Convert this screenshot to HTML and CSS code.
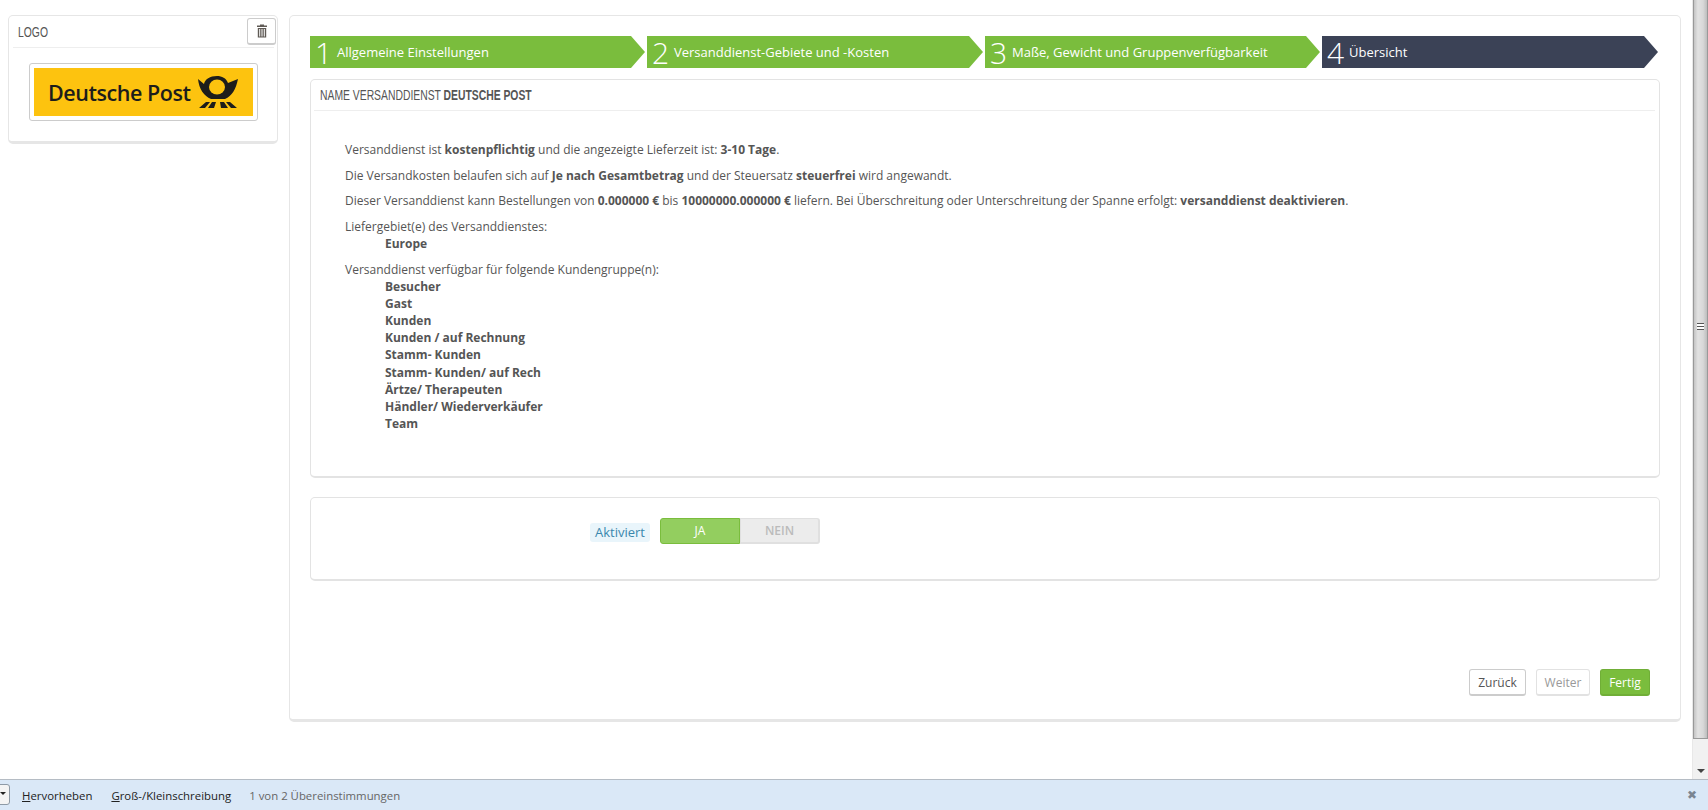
FILE: index.html
```html
<!DOCTYPE html>
<html lang="de">
<head>
<meta charset="utf-8">
<title>Versanddienst</title>
<link rel="stylesheet" href="styles.css">
</head>
<body>
<div class="page">
  <div class="content">
    <aside class="logo-panel">
      <div class="logo-head">
        <span class="logo-title cond">LOGO</span>
        <button class="trash-btn" aria-label="Löschen">
          <svg width="12" height="14" viewBox="0 0 12 14"><path d="M4 1.500V.5h4v1h3V3H1V1.500zM1.800 4h8.400v9.500H1.800zM3.200 5v7.500h1V5zm2.300 0v7.500h1V5zm2.300 0v7.500h1V5z" fill="#5f5a55" fill-rule="evenodd"/></svg>
        </button>
      </div>
      <div class="logo-frame">
        <div class="logo-img">
          <span class="logo-text">Deutsche Post</span>
          <svg class="horn" width="40" height="32" viewBox="0 0 40 32">
            <path d="M0 3 C1 13 6 20 13 23 L27 23 C34 20 38 13 40 3 L30 7 C28 2 24 0 19 0 C12 0 7 3 6 8 Z" fill="#1d1d1b"/>
            <ellipse cx="19" cy="11" rx="8" ry="7.500" fill="#fdc30f"/>
            <path d="M1 32 L8 26 H12 L7 32 Z M10 32 L14 26 H18 L16 32 Z M23 32 L22 26 H26 L30 32 Z M33 32 L28 26 H32 L39 32 Z" fill="#1d1d1b"/>
          </svg>
        </div>
      </div>
    </aside>
    <main class="main-panel">
      <nav class="steps">
        <div class="step step-a"><span class="num">1</span><span class="label">Allgemeine Einstellungen</span></div>
        <div class="step step-b"><span class="num">2</span><span class="label">Versanddienst-Gebiete und -Kosten</span></div>
        <div class="step step-a"><span class="num">3</span><span class="label">Maße, Gewicht und Gruppenverfügbarkeit</span></div>
        <div class="step step-b current"><span class="num">4</span><span class="label">Übersicht</span></div>
      </nav>
      <section class="card summary">
        <h3 class="card-title"><span class="cond">NAME VERSANDDIENST <b>DEUTSCHE POST</b></span></h3>
        <div class="summary-body">
          <p>Versanddienst ist <b>kostenpflichtig</b> und die angezeigte Lieferzeit ist: <b>3-10 Tage</b>.</p>
          <p>Die Versandkosten belaufen sich auf <b>Je nach Gesamtbetrag</b> und der Steuersatz <b>steuerfrei</b> wird angewandt.</p>
          <p>Dieser Versanddienst kann Bestellungen von <b>0.000000 €</b> bis <b>10000000.000000 €</b> liefern. Bei Überschreitung oder Unterschreitung der Spanne erfolgt: <b>versanddienst deaktivieren</b>.</p>
          <p>Liefergebiet(e) des Versanddienstes:</p>
          <ul class="names"><li>Europe</li></ul>
          <p>Versanddienst verfügbar für folgende Kundengruppe(n):</p>
          <ul class="names">
            <li>Besucher</li><li>Gast</li><li>Kunden</li><li>Kunden / auf Rechnung</li><li>Stamm- Kunden</li><li>Stamm- Kunden/ auf Rech</li><li>Ärtze/ Therapeuten</li><li>Händler/ Wiederverkäufer</li><li>Team</li>
          </ul>
        </div>
      </section>
      <section class="card toggle-card">
        <span class="hint">Aktiviert</span>
        <div class="switch"><span class="sw-on">JA</span><span class="sw-off">NEIN</span></div>
      </section>
      <div class="actions">
        <button class="btn btn-back">Zurück</button>
        <button class="btn btn-next disabled">Weiter</button>
        <button class="btn btn-done primary">Fertig</button>
      </div>
    </main>
  </div>
  <div class="scrollbar">
    <div class="sb-thumb"><span class="grip"></span></div>
    <div class="sb-arrow"></div>
  </div>
</div>
<footer class="findbar">
  <span class="find-box"><span class="find-caret"></span></span>
  <span class="find-opt"><u>H</u>ervorheben</span>
  <span class="find-opt"><u>G</u>roß-/Kleinschreibung</span>
  <span class="find-status">1 von 2 Übereinstimmungen</span>
  <span class="find-close">✖</span>
</footer>
</body>
</html>
```
FILE: styles.css
```css
* { box-sizing: border-box; }
html, body { margin: 0; height: 100%; overflow: hidden; }
body {
  width: 1708px; height: 810px; background: #fff; color: #555;
  font-family: "Open Sans", "Noto Sans", sans-serif; font-size: 12px;
  display: flex; flex-direction: column;
}
.page { flex: 1; display: flex; min-height: 0; }
.content { flex: 1; display: flex; align-items: flex-start; gap: 11px; padding: 15px 11px 0 8px; }
.cond {
  display: inline-block; transform: scaleX(.74); transform-origin: left center; white-space: nowrap;
  font-family: "Liberation Sans", sans-serif; font-size: 14px; color: #555;
}

.logo-panel {
  width: 270px; height: 129px; flex: none; padding: 0 3px 0 4px;
  border: 1px solid #e6e6e6; border-bottom-width: 3px; border-radius: 5px;
}
.logo-head { display: flex; align-items: flex-start; justify-content: space-between; height: 32px; border-bottom: 1px solid #eee; padding: 2px 0 0 5px; }
.logo-title { margin-top: 6px; }
.trash-btn {
  width: 29px; height: 27px; margin-right: -2px; padding: 0; display: flex; align-items: center; justify-content: center;
  background: #fff; border: 1px solid #ccc; border-bottom-width: 2px; border-radius: 3px;
}
.logo-frame { margin: 15px 0 0 16px; width: 229px; height: 58px; padding: 4px; border: 1px solid #ccc; border-radius: 3px; }
.logo-img { height: 48px; background: #fdc30f; display: flex; align-items: center; padding-left: 14px; gap: 8px; }
.logo-text { font-weight: 600; font-size: 21.5px; letter-spacing: -.45px; color: #1d1d1b; width: 142px; white-space: nowrap; }
.horn { flex: none; }

.main-panel {
  width: 1392px; height: 707px; flex: none; padding: 20px 0 0 20px;
  border: 1px solid #e6e6e6; border-bottom-width: 3px; border-radius: 5px;
  display: flex; flex-direction: column;
}
.steps { display: flex; gap: 2px; height: 32px; }
.step {
  height: 32px; background: #7abd3d; color: #fff; display: flex; align-items: center; padding-left: 5px;
  clip-path: polygon(0 0, calc(100% - 14px) 0, 100% 50%, calc(100% - 14px) 100%, 0 100%);
}
.step-a { width: 335px; }
.step-b { width: 336px; }
.step.current { background: #3b4256; }
.num { width: 22px; font-size: 30px; font-weight: 300; line-height: 32px; padding-top: 2px; }
.label { font-size: 13px; }

.card { border: 1px solid #e3e3e3; border-bottom-width: 2px; border-radius: 5px; width: 1350px; }
.summary { height: 399px; margin-top: 11px; padding: 0 4px 0 3px; }
.card-title {
  margin: 0; height: 31px; line-height: 30px; padding-left: 6px; border-bottom: 1px solid #eee;
  font-size: 14px; font-weight: 400;
}
.summary-body { padding: 30px 0 0 31px; line-height: 17.14px; color: #555; }
.summary-body p { margin: 0 0 8.5px; }
.names { margin: -8.5px 0 8.5px; padding: 0 0 0 40px; list-style: none; font-weight: 700; }

.toggle-card { height: 84px; margin-top: 19px; display: flex; align-items: flex-start; padding: 20px 0 0 279px; gap: 10px; }
.hint { margin-top: 5px; width: 60px; text-align: center; height: 19px; line-height: 19px; font-size: 13px; background: #e9f5fb; color: #3a87ad; border-radius: 3px; }
.switch { width: 160px; height: 26px; display: flex; font-size: 12px; line-height: 24px; text-align: center; }
.sw-on { width: 80px; background: #93ce5f; border: 1px solid #7abd3d; border-radius: 3px 0 0 3px; color: #fff; }
.sw-off { width: 80px; background: #ececec; border: 1px solid #e0e0e0; border-width: 1px 2px 2px 1px; border-radius: 0 3px 3px 0; color: #bbb; font-weight: 600; }

.actions { display: flex; justify-content: flex-end; gap: 10px; margin-top: 88px; width: 1340px; }
.btn {
  height: 27px; padding: 0; background: #fff; color: #555; font: 12px "Open Sans", sans-serif;
  border: 1px solid #ccc; border-bottom-width: 2px; border-radius: 3px;
}
.btn-back { width: 57px; }
.btn-next { width: 54px; }
.btn-done { width: 50px; }
.btn.disabled { color: #999; border-color: #e2e2e2; }
.btn.primary { background: #7abd3d; border-color: #70ae37; color: #fff; }

.scrollbar { width: 16px; flex: none; background: #f1f1f1; border-left: 1px solid #e8e8e8; position: relative; }
.sb-thumb {
  position: absolute; left: 0; right: 0; top: 0; height: 739px;
  background: linear-gradient(90deg, #c4c4c4, #e2e2e2 30%, #d8d8d8 70%, #bdbdbd);
  border: 1px solid #999; display: flex; align-items: center; justify-content: center; border-top: 0;
}
.grip { width: 7px; height: 7px; margin-top: -85px; border-top: 1px solid #555; border-bottom: 1px solid #555; background: linear-gradient(#fff 0 2px, #555 2px 3px, #fff 3px); }
.sb-arrow { position: absolute; left: 4px; bottom: 6px; width: 0; height: 0; border: 4px solid transparent; border-top: 4px solid #444; border-bottom: 0; }

.findbar {
  height: 31px; flex: none; background: #dae8f7; border-top: 1px solid #b5bcc4;
  display: flex; align-items: center; font: 11.4px "Open Sans", sans-serif; color: #222; position: relative;
}
.find-box { position: absolute; left: -8px; top: 4px; width: 18px; height: 21px; background: #f4f4f4; border: 1px solid #8e9aa6; border-radius: 3px; }
.find-caret { position: absolute; right: 3px; top: 7px; border: 3px solid transparent; border-top-color: #222; border-bottom: 0; }
.find-opt { margin-left: 22px; }
.find-opt + .find-opt { margin-left: 19px; }
.find-status { margin-left: 18px; color: #666; }
.find-close { position: absolute; right: 11px; top: 6px; color: #7a8591; font-size: 12px; }
```
